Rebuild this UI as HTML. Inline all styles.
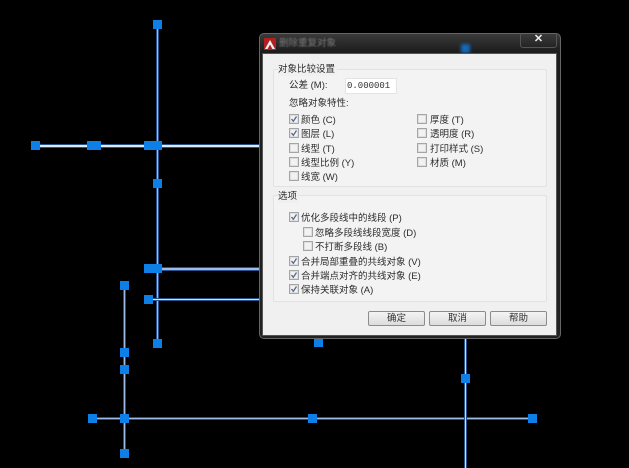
<!DOCTYPE html>
<html><head><meta charset="utf-8">
<style>
html,body{margin:0;padding:0;background:#000;}
#r{position:relative;width:629px;height:468px;overflow:hidden;background:#000;font-family:"Liberation Sans","Noto Sans CJK SC",sans-serif;}
.g{position:absolute;width:9px;height:9px;background:#0f7fe8;}
.h,.v{position:absolute;background:#9dbbe6;box-shadow:0 0 0 1px #28528c;}
.h{height:1px}.v{width:1px}
#d{position:absolute;left:259px;top:33px;width:302px;height:306px;box-sizing:border-box;border:1px solid #666;border-radius:5px;background:linear-gradient(#3a3a3a,#1c1c1c 18px,#222);}
#c{position:absolute;left:262px;top:53px;width:295px;height:283px;background:#f0f0f0;border:1px solid #555;box-sizing:border-box;filter:blur(.3px);}
.t{position:absolute;font-size:9.5px;line-height:12px;color:#2c2c2c;white-space:nowrap;filter:blur(.3px);}
.cb{position:absolute;width:10px;height:10px;box-sizing:border-box;background:#f2f2f2;border:1px solid #a5a5a5;box-shadow:inset 0 0 0 1px #dedede;filter:blur(.25px);}
.cb svg{position:absolute;left:0;top:0}
.gp{position:absolute;border:1px solid #e2e2e2;border-radius:2px;box-sizing:border-box;background:#f3f3f3;}
.b{position:absolute;top:311px;height:15px;width:57px;box-sizing:border-box;border:1px solid #8c8c8c;border-radius:2px;background:linear-gradient(#f4f4f4,#dcdcdc);font-size:9.5px;line-height:13px;text-align:center;color:#333;}
</style></head><body>
<div id="r">
<div class="v" style="left:157px;top:24px;height:319px"></div>
<div class="h" style="left:35px;top:145px;height:2px;width:224px;background:#dfe9f8"></div>
<div class="h" style="left:150px;top:268px;height:2px;width:110px"></div>
<div class="h" style="left:148px;top:299px;width:112px;background:#d5e2f5"></div>
<div class="v" style="left:124px;top:285px;height:168px"></div>
<div class="h" style="left:92px;top:418px;width:440px"></div>
<div class="v" style="left:465px;top:335px;height:133px;background:#cfe0f5"></div>
<div class="g" style="left:153px;top:20px"></div>
<div class="g" style="left:31px;top:141px"></div>
<div class="g" style="left:87px;top:141px;width:14px"></div>
<div class="g" style="left:144px;top:141px;width:18px"></div>
<div class="g" style="left:153px;top:179px"></div>
<div class="g" style="left:144px;top:264px;width:18px"></div>
<div class="g" style="left:144px;top:295px"></div>
<div class="g" style="left:153px;top:339px"></div>
<div class="g" style="left:120px;top:281px"></div>
<div class="g" style="left:120px;top:348px"></div>
<div class="g" style="left:120px;top:365px"></div>
<div class="g" style="left:120px;top:414px"></div>
<div class="g" style="left:120px;top:449px"></div>
<div class="g" style="left:88px;top:414px"></div>
<div class="g" style="left:308px;top:414px"></div>
<div class="g" style="left:528px;top:414px"></div>
<div class="g" style="left:461px;top:374px"></div>
<div class="g" style="left:314px;top:338px"></div>
<div id="d"></div>
<div class="g" style="left:461px;top:44px;background:#1668b8;filter:blur(1.5px)"></div>
<div style="position:absolute;left:520px;top:33px;width:37px;height:15px;border:1px solid #555;border-top:0;border-radius:0 0 3px 3px;box-sizing:border-box;color:#eee;font-size:11px;line-height:12px;text-align:center;font-weight:bold">✕</div>
<svg style="position:absolute;left:264px;top:38px" width="12" height="12"><rect width="12" height="12" fill="#b02020"/><path d="M1 11 6 2 11 11H8.500L6 6.500 3.500 11Z" fill="#f2f2f2"/></svg>
<div class="t" style="left:279px;top:38px;color:#777;filter:blur(.5px)">删除重复对象</div>
<div id="c"></div>
<div class="gp" style="left:273px;top:69px;width:274px;height:118px"></div>
<div class="gp" style="left:273px;top:195px;width:274px;height:107px"></div>
<div class="t" style="left:278px;top:64px;background:#f0f0f0;padding-right:2px">对象比较设置</div>
<div class="t" style="left:289px;top:80px">公差 (M):</div>
<div style="position:absolute;left:345px;top:78px;width:52px;height:16px;background:#fff;border:1px solid #e4e4e4;box-sizing:border-box;font:9px/14px 'Liberation Mono',monospace;color:#333;padding-left:1px">0.000001</div>
<div class="t" style="left:289px;top:98px">忽略对象特性:</div>

<div class="cb" style="left:289px;top:114px"><svg width="8" height="8"><path d="M1.500 4 3.300 6.300 6.500 1.500" fill="none" stroke="#54678f" stroke-width="1.300"/></svg></div><div class="t" style="left:301px;top:115px">颜色 (C)</div>
<div class="cb" style="left:289px;top:128px"><svg width="8" height="8"><path d="M1.500 4 3.300 6.300 6.500 1.500" fill="none" stroke="#54678f" stroke-width="1.300"/></svg></div><div class="t" style="left:301px;top:129px">图层 (L)</div>
<div class="cb" style="left:289px;top:143px"></div><div class="t" style="left:301px;top:144px">线型 (T)</div>
<div class="cb" style="left:289px;top:157px"></div><div class="t" style="left:301px;top:158px">线型比例 (Y)</div>
<div class="cb" style="left:289px;top:171px"></div><div class="t" style="left:301px;top:172px">线宽 (W)</div>
<div class="cb" style="left:417px;top:114px"></div><div class="t" style="left:430px;top:115px">厚度 (T)</div>
<div class="cb" style="left:417px;top:128px"></div><div class="t" style="left:430px;top:129px">透明度 (R)</div>
<div class="cb" style="left:417px;top:143px"></div><div class="t" style="left:430px;top:144px">打印样式 (S)</div>
<div class="cb" style="left:417px;top:157px"></div><div class="t" style="left:430px;top:158px">材质 (M)</div>

<div class="t" style="left:278px;top:191px;background:#f0f0f0;padding-right:2px">选项</div>
<div class="cb" style="left:289px;top:212px"><svg width="8" height="8"><path d="M1.500 4 3.300 6.300 6.500 1.500" fill="none" stroke="#54678f" stroke-width="1.300"/></svg></div><div class="t" style="left:301px;top:213px">优化多段线中的线段 (P)</div>
<div class="cb" style="left:303px;top:227px"></div><div class="t" style="left:315px;top:228px">忽略多段线线段宽度 (D)</div>
<div class="cb" style="left:303px;top:241px"></div><div class="t" style="left:315px;top:242px">不打断多段线 (B)</div>
<div class="cb" style="left:289px;top:256px"><svg width="8" height="8"><path d="M1.500 4 3.300 6.300 6.500 1.500" fill="none" stroke="#54678f" stroke-width="1.300"/></svg></div><div class="t" style="left:301px;top:257px">合并局部重叠的共线对象 (V)</div>
<div class="cb" style="left:289px;top:270px"><svg width="8" height="8"><path d="M1.500 4 3.300 6.300 6.500 1.500" fill="none" stroke="#54678f" stroke-width="1.300"/></svg></div><div class="t" style="left:301px;top:271px">合并端点对齐的共线对象 (E)</div>
<div class="cb" style="left:289px;top:284px"><svg width="8" height="8"><path d="M1.500 4 3.300 6.300 6.500 1.500" fill="none" stroke="#54678f" stroke-width="1.300"/></svg></div><div class="t" style="left:301px;top:285px">保持关联对象 (A)</div>
<div class="b" style="left:368px">确定</div>
<div class="b" style="left:429px">取消</div>
<div class="b" style="left:490px">帮助</div>
</div>
</body></html>
